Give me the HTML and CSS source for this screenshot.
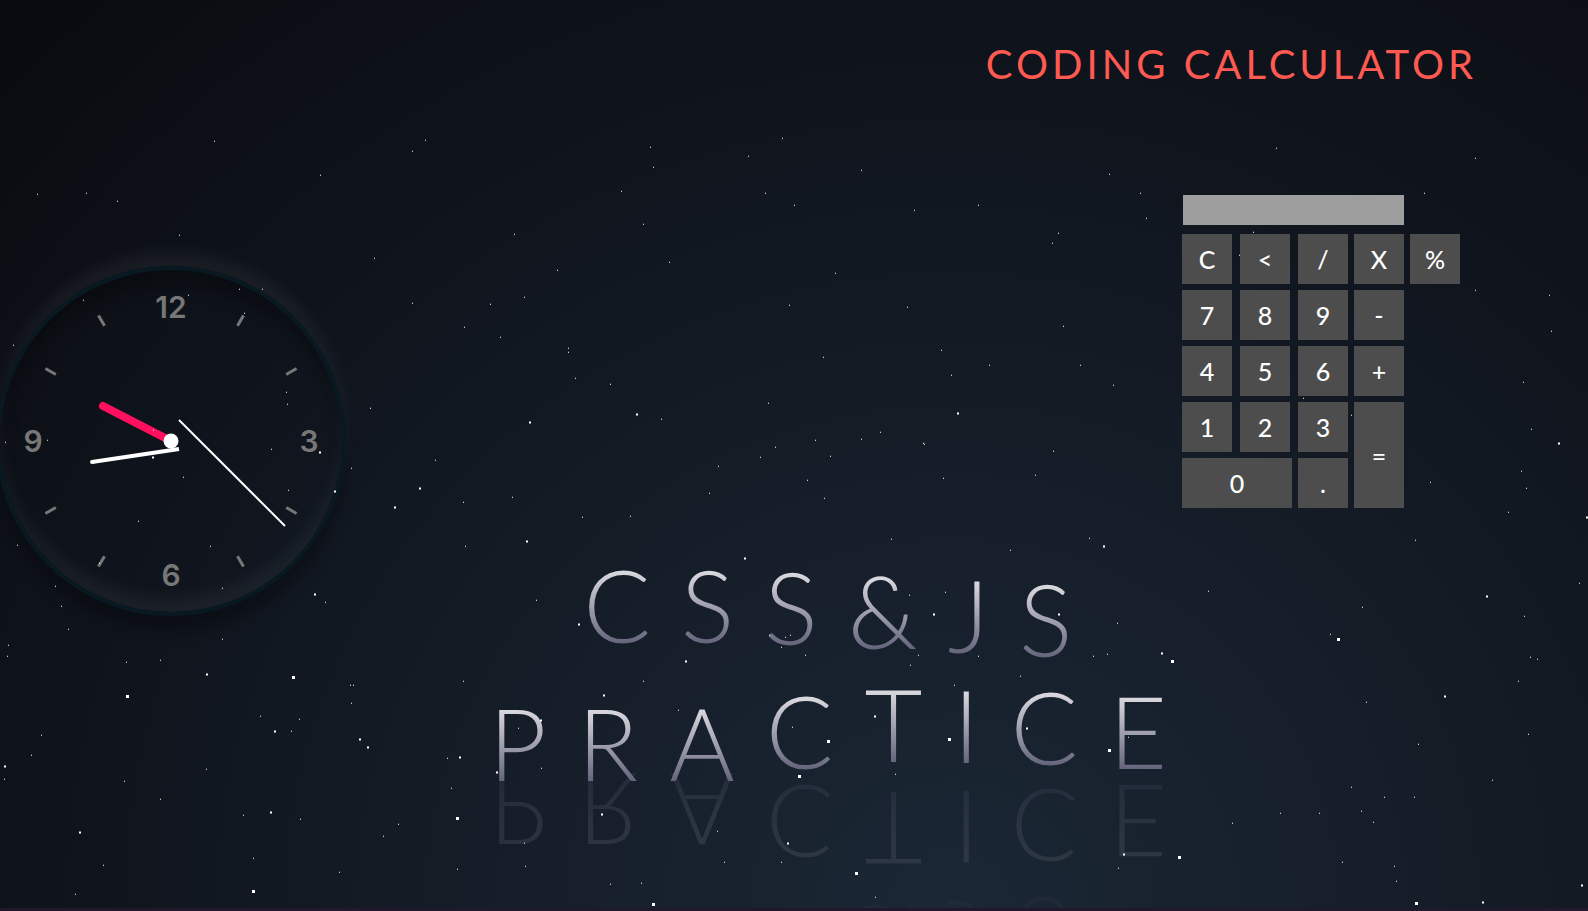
FILE: index.html
```html
<!DOCTYPE html>
<html lang="en">
<head>
<meta charset="utf-8">
<title>Coding Calculator</title>
<link rel="stylesheet" href="styles.css">
</head>
<body>
<div class="sky">
  <header class="header">
    <h1 class="title">CODING CALCULATOR</h1>
  </header>
  <main class="main">
    <svg class="clock" viewBox="-171 -171 342 342" role="img" aria-label="Clock">
      <g class="ticks">
        <path d="M0-133V-145" transform="rotate(30)"/>
        <path d="M0-133V-145" transform="rotate(60)"/>
        <path d="M0-133V-145" transform="rotate(120)"/>
        <path d="M0-133V-145" transform="rotate(150)"/>
        <path d="M0-133V-145" transform="rotate(210)"/>
        <path d="M0-133V-145" transform="rotate(240)"/>
        <path d="M0-133V-145" transform="rotate(300)"/>
        <path d="M0-133V-145" transform="rotate(330)"/>
      </g>
      <g class="numbers">
        <text x="0" y="-123">12</text>
        <text x="138" y="11">3</text>
        <text x="0" y="145">6</text>
        <text x="-138" y="11">9</text>
      </g>
      <path class="hour" d="M0 0L-68-35"/>
      <path class="minute" d="M8 8L-79 21"/>
      <circle class="minute-tip" cx="-79" cy="21" r="2"/>
      <path class="second" d="M8-21L114 85"/>
      <circle class="pin" r="7.5"/>
    </svg>
    <div class="banner">
      <div class="line line-top">
        <span>C</span><span>S</span><span>S</span><span>&amp;</span><span>J</span><span>S</span>
      </div>
      <div class="line line-bottom">
        <span>P</span><span>R</span><span>A</span><span>C</span><span>T</span><span>I</span><span>C</span><span>E</span>
      </div>
    </div>
    <form class="calculator">
      <input class="display" type="text" aria-label="Result" readonly>
      <div class="keys">
        <button type="button">C</button>
        <button type="button">&lt;</button>
        <button type="button">/</button>
        <button type="button">X</button>
        <button type="button">%</button>
        <button class="first" type="button">7</button>
        <button type="button">8</button>
        <button type="button">9</button>
        <button type="button">-</button>
        <button class="first" type="button">4</button>
        <button type="button">5</button>
        <button type="button">6</button>
        <button type="button">+</button>
        <button class="first" type="button">1</button>
        <button type="button">2</button>
        <button type="button">3</button>
        <button class="equals" type="button">=</button>
        <button class="zero" type="button">0</button>
        <button type="button">.</button>
      </div>
    </form>
  </main>
  <svg class="stars" aria-hidden="true"></svg>
</div>
<script src="stars.js"></script>
</body>
</html>
```
FILE: styles.css
```css
* {
  box-sizing: border-box;
}

body {
  margin: 0;
  background: #21192b;
  font-family: Lato, "Liberation Sans", sans-serif;
}

.sky {
  position: relative;
  display: flex;
  flex-direction: column;
  min-height: calc(100vh - 3px);
  overflow: hidden;
  background: radial-gradient(ellipse at 60% 100%, #1b2735 0%, #090a0f 100%);
}

.header {
  padding: 40px 111px 0 0;
}

.title {
  margin: 0;
  color: #ff5a52;
  font-size: 40px;
  font-weight: 400;
  letter-spacing: 4px;
  line-height: 48px;
  text-align: right;
}

.main {
  flex: 1;
  display: grid;
  grid-template-columns: 346px 1fr 406px;
}

.clock {
  justify-self: end;
  width: 350px;
  height: 350px;
  margin-top: 178px;
  border: 4px solid #091921;
  border-radius: 50%;
  box-shadow:
    0 -15px 15px rgba(255, 255, 255, 0.05),
    inset 0 -15px 15px rgba(255, 255, 255, 0.05),
    0 15px 15px rgba(0, 0, 0, 0.3),
    inset 0 15px 15px rgba(0, 0, 0, 0.3);
}

.ticks {
  stroke: #777;
  stroke-width: 3;
}

.numbers {
  fill: #777;
  font-family: Inter, "Liberation Sans", sans-serif;
  font-size: 30px;
  font-weight: 600;
  text-anchor: middle;
}

.hour {
  stroke: #ff105e;
  stroke-width: 8;
  stroke-linecap: round;
}

.minute {
  stroke: #fff;
  stroke-width: 4;
}

.minute-tip,
.pin {
  fill: #fff;
}

.second {
  stroke: #fff;
  stroke-width: 2;
}

.banner {
  align-self: end;
  justify-self: end;
  display: flex;
  flex-direction: column;
  gap: 58px;
  margin: 0 15px 126px 0;
  -webkit-box-reflect: below -10px linear-gradient(transparent, rgba(0, 0, 0, 0.17));
}

.line {
  display: flex;
  justify-content: center;
  gap: 30px;
  font-size: 100px;
  font-weight: 300;
  line-height: 80px;
}

.line-bottom {
  gap: 31px;
}

.line span {
  background: linear-gradient(#e7e5e9, #63637b);
  -webkit-background-clip: text;
  background-clip: text;
  color: transparent;
}

/* A frozen wave that runs through the letters */
.line-top :nth-child(3) { transform: translateY(2px); }
.line-top :nth-child(4) { transform: translateY(6px); }
.line-top :nth-child(5) { transform: translateY(10px); }
.line-top :nth-child(6) { transform: translateY(14px); }
.line-bottom :nth-child(4) { transform: translateY(-12px); }
.line-bottom :nth-child(5) { transform: translateY(-19px); }
.line-bottom :nth-child(6) { transform: translateY(-18px); }
.line-bottom :nth-child(7) { transform: translateY(-16px); }
.line-bottom :nth-child(8) { transform: translateY(-12px); }

.calculator {
  display: flex;
  flex-direction: column;
  gap: 9px;
  margin-top: 107px;
}

.display {
  width: 221px;
  height: 30px;
  margin-left: 1px;
  padding: 0 8px;
  border: 0;
  background: #9e9e9e;
  font: inherit;
  font-size: 25px;
}

.keys {
  display: grid;
  grid-template-columns: 52px 52px 50px 50px 50px;
  grid-auto-rows: 50px;
  gap: 6px;
}

.keys button {
  width: 50px;
  padding: 0;
  border: 0;
  background: #4d4d4d;
  color: #fff;
  font: inherit;
  font-size: 25px;
  font-weight: 500;
}

.keys .first {
  grid-column: 1;
}

.keys .equals {
  grid-area: 4 / 4 / span 2;
}

.keys .zero {
  grid-column: 1 / span 2;
  width: 110px;
}

.stars {
  position: absolute;
  inset: 0;
  width: 100%;
  height: 100%;
  fill: #fff;
  pointer-events: none;
}
```
FILE: stars.js
```js
// Star positions as "x,y" pairs, grouped by size.
const small = `214,141 37,194 86,193 117,201 179,235 320,175 412,151 425,140 514,234 374,258
239,289 262,289 188,295 524,297 83,300 244,313 13,345 286,392 287,404 5,442 47,440 271,449
153,430 183,477 351,468 288,490 138,521 210,546 99,563 17,545 222,588 55,586 61,606 325,602
68,629 8,645 7,656 126,662 160,660 222,639 350,685 353,685 351,703 463,681 260,716 299,719
291,731 41,735 31,755 4,779 206,769 124,781 160,799 447,758 451,788 243,815 300,819 398,824
383,836 103,865 253,858 339,872 457,869 75,894 518,728 524,843 525,866 536,600 769,635
785,637 790,635 781,647 805,655 643,681 678,710 792,727 541,768 717,831 724,862 781,862
610,884 641,883 1010,550 909,595 945,592 1117,623 918,655 910,665 978,656 1093,656 1107,654
1020,676 954,685 1128,737 895,774 875,897 1118,868 1362,607 1524,616 1330,634 1530,657
1537,659 1518,681 1366,702 1528,734 1418,744 1492,780 1351,787 1384,797 1414,797 1280,813
1319,813 1361,811 1373,822 1232,823 1342,862 1394,866 1396,881 782,138 650,147 748,156
653,167 861,170 621,191 765,193 794,205 914,210 978,205 643,224 669,262 557,270 835,273
789,305 907,307 568,348 568,352 823,357 941,350 464,327 500,337 575,378 610,384 370,408
661,419 768,403 435,460 775,447 760,457 718,466 463,502 512,497 709,493 582,517 630,516
465,546 412,303 490,304 1063,326 989,365 1080,365 951,375 1113,385 880,432 815,440 861,439
923,443 924,444 830,456 1053,451 807,480 1035,475 943,478 824,498 891,539 1089,538
1276,148 1109,174 1475,158 1140,193 1424,193 1146,218 1253,232 1239,255 1475,290 1549,295
1551,331 1303,398 1351,415 1523,382 1531,429 1521,471 1430,482 1526,488 1508,512 1415,540
1208,591 1579,583 1058,233 1052,243`;

const medium = `320,452 153,457 335,491 315,594 207,674 275,731 360,739 368,747 5,766 460,757
271,812 80,832 497,772 745,558 579,624 686,661 604,695 541,720 602,814 788,843 934,614
1059,614 1162,653 875,716 1027,728 1124,854 1445,696 1582,885 1483,902 637,414 530,422
420,488 395,507 527,541 958,413 1104,546 1559,443 1487,596 1587,517`;

const large = `293,677 127,696 457,818 253,891 828,741 799,776 653,904 1172,661 949,739
1109,750 1179,857 856,873 1338,639 1416,903`;

const field = document.querySelector('.stars');

function draw(list, size, dx, dy) {
  for (const pair of list.trim().split(/\s+/)) {
    const [x, y] = pair.split(',').map(Number);
    const star = document.createElementNS('http://www.w3.org/2000/svg', 'rect');
    star.setAttribute('x', x - dx);
    star.setAttribute('y', y - dy);
    star.setAttribute('width', size);
    star.setAttribute('height', size);
    field.append(star);
  }
}

draw(small, 1, 0, 0.25);
draw(medium, 2, 1, 0.5);
draw(large, 3, 1, 1);
```
